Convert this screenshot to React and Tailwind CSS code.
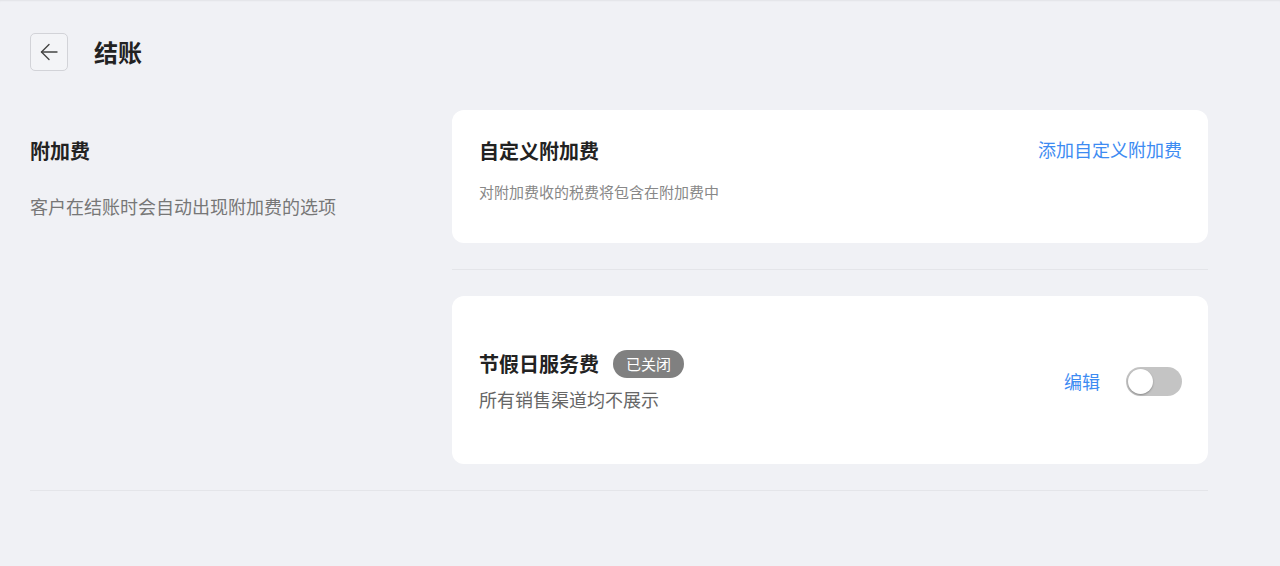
export default function App() {
  return (
    <div
      className="min-h-[566px] bg-[#f0f1f5] shadow-[inset_0_2px_2px_-1px_rgba(0,0,0,0.06)] pl-[30px] pt-[33px]"
      style={{ fontFamily: '"Noto Sans CJK SC", "Noto Sans", sans-serif' }}
    >
      <div className="flex items-center gap-[26px]">
        <button className="w-[38px] h-[38px] flex items-center justify-center rounded-[5px] border border-[#d2d3d8] bg-[#f3f4f7] text-[#444]">
          <svg width="18" height="18" viewBox="0 0 18 18" fill="none" stroke="currentColor" strokeWidth="1.4" strokeLinecap="round" strokeLinejoin="round">
            <path d="M17 9H1.5" />
            <path d="M9 1.5L1.5 9L9 16.5" />
          </svg>
        </button>
        <h1 className="text-[24px] leading-[32px] font-bold text-[#222]">结账</h1>
      </div>

      <div className="w-[1178px] mt-[39px] flex">
        <div className="w-[422px] pt-[27px]">
          <h2 className="text-[20px] leading-[28px] font-bold text-[#222]">附加费</h2>
          <p className="mt-[28px] text-[18px] leading-[26px] text-[#777]">客户在结账时会自动出现附加费的选项</p>
        </div>

        <div className="flex-1">
          <div className="h-[133px] bg-white rounded-[12px] pl-[27px] pr-[26px] pt-[27px] flex justify-between">
            <div>
              <h3 className="text-[20px] leading-[28px] font-bold text-[#222]">自定义附加费</h3>
              <p className="mt-[16px] text-[15px] leading-[22px] text-[#888]">对附加费收的税费将包含在附加费中</p>
            </div>
            <button className="h-[24px] text-[18px] leading-[24px] text-[#3d8bf2]">添加自定义附加费</button>
          </div>

          <div className="my-[26px] h-px bg-[#e4e5e9]" />

          <div className="h-[168px] bg-white rounded-[12px] pl-[27px] pr-[26px] flex items-center justify-between">
            <div className="pt-[2px]">
              <div className="flex items-center gap-[14px]">
                <h3 className="text-[20px] leading-[28px] font-bold text-[#222]">节假日服务费</h3>
                <span className="h-[28px] px-[13px] rounded-full bg-[#808080] text-white text-[15px] leading-[28px]">已关闭</span>
              </div>
              <p className="mt-[8px] text-[18px] leading-[26px] text-[#666]">所有销售渠道均不展示</p>
            </div>
            <div className="flex items-center gap-[26px] pt-[2px]">
              <button className="text-[18px] leading-[26px] text-[#3d8bf2]">编辑</button>
              <div className="w-[56px] h-[29px] rounded-full bg-[#c4c4c4] p-[2px] flex items-center">
                <div className="w-[25px] h-[25px] rounded-full bg-white shadow-[0_1px_2px_rgba(0,0,0,0.3)]" />
              </div>
            </div>
          </div>
        </div>
      </div>

      <div className="w-[1178px] mt-[26px] h-px bg-[#e4e5e9]" />
    </div>
  );
}
